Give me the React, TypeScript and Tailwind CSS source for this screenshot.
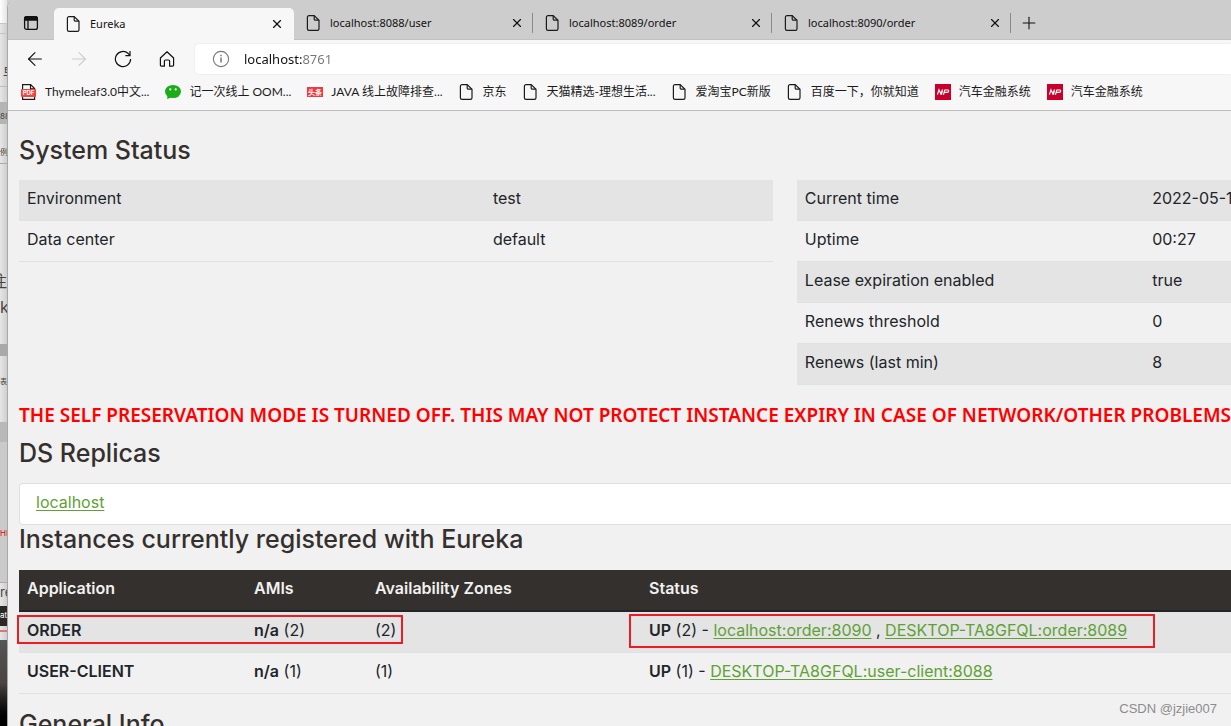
import React from 'react';
import { X, Plus, ArrowLeft, ArrowRight } from 'lucide-react';

const PageIcon = () => (
  <svg width="16" height="18" viewBox="0 0 16 18" fill="none" stroke="#1b1b1b" strokeWidth="1.2" className="shrink-0">
    <path d="M3 1.6h5.2L13 6.2v8.6a1.600 1.600 0 0 1-1.600 1.600H3a1.600 1.600 0 0 1-1.600-1.600V3.200A1.600 1.600 0 0 1 3 1.600z" />
    <path d="M8.2 1.8v3.2a1.2 1.2 0 0 0 1.2 1.2h3.4" />
  </svg>
);

const PdfIcon = () => (
  <svg width="16" height="18" viewBox="0 0 16 18" className="shrink-0">
    <path d="M1.6 1.6h8l4 4v10.8h-12z" fill="#fff" stroke="#1b1b1b" strokeWidth="1.2" />
    <path d="M9.5 1.6v4.2h4" fill="none" stroke="#1b1b1b" strokeWidth="1.2" />
    <rect x="0" y="6" width="15" height="8" rx="1" fill="#fb3f3f" />
    <text x="7.5" y="12.3" textAnchor="middle" fontSize="6" fontWeight="700" fill="#fff" fontFamily="Inter, sans-serif">PDF</text>
  </svg>
);

const ChatIcon = () => (
  <svg width="16" height="16" viewBox="0 0 16 16" className="shrink-0">
    <ellipse cx="8" cy="7.5" rx="8" ry="6.6" fill="#1aad19" />
    <path d="M2.6 11l-.4 4.2L6.4 13z" fill="#1aad19" />
    <circle cx="5.3" cy="5.4" r="1.1" fill="#fff" />
    <circle cx="10.7" cy="5.4" r="1.1" fill="#fff" />
  </svg>
);

const NewsIcon = () => (
  <svg width="16" height="16" viewBox="0 0 16 16" className="shrink-0">
    <rect width="16" height="16" rx="1" fill="#fff" />
    <rect y="3" width="16" height="10" fill="#f8353b" />
    <text x="8" y="10.6" textAnchor="middle" fontSize="7" fontWeight="700" fill="#fff" fontFamily="Noto Sans CJK SC, sans-serif">头条</text>
  </svg>
);

const MpIcon = () => (
  <svg width="16" height="16" viewBox="0 0 16 16" className="shrink-0">
    <rect width="16" height="16" fill="#c8002b" />
    <path d="M2.4 10.6L4 5.8l1.8 4L7.6 5.6 6.4 10.6M8.4 10.8l1.4-4.8h3.2c1 0 .9 2.4-.6 2.4H9.4" fill="none" stroke="#fff" strokeWidth="1.2" />
  </svg>
);

const tabs = [
  { title: 'Eureka', active: true, divider: false },
  { title: 'localhost:8088/user', active: false, divider: true },
  { title: 'localhost:8089/order', active: false, divider: true },
  { title: 'localhost:8090/order', active: false, divider: true },
];

const bookmarks = [
  { label: 'Thymeleaf3.0中文...', Icon: PdfIcon },
  { label: '记一次线上 OOM...', Icon: ChatIcon },
  { label: 'JAVA 线上故障排查...', Icon: NewsIcon },
  { label: '京东', Icon: PageIcon },
  { label: '天猫精选-理想生活...', Icon: PageIcon },
  { label: '爱淘宝PC新版', Icon: PageIcon },
  { label: '百度一下，你就知道', Icon: PageIcon },
  { label: '汽车金融系统', Icon: MpIcon },
  { label: '汽车金融系统', Icon: MpIcon },
];

const environment = [
  ['Environment', 'test'],
  ['Data center', 'default'],
];

const runtime = [
  ['Current time', '2022-05-1'],
  ['Uptime', '00:27'],
  ['Lease expiration enabled', 'true'],
  ['Renews threshold', '0'],
  ['Renews (last min)', '8'],
];

const instances = [
  { app: 'ORDER', count: 2, links: ['localhost:order:8090', 'DESKTOP-TA8GFQL:order:8089'] },
  { app: 'USER-CLIENT', count: 1, links: ['DESKTOP-TA8GFQL:user-client:8088'] },
];

// Strip of the window that lies behind the browser
const WindowBehind = () => (
  <div className="w-[7px] shrink-0 flex flex-col overflow-hidden bg-linear-to-r from-[#e6e6e6] to-[#cfcfcf] font-['Inter','Noto_Sans_CJK_SC',sans-serif] text-[#444]">
    <div className="h-6 bg-linear-to-r from-white to-[#e4e4e4] border-b border-[#c4c4c4]" />
    <div className="h-[10px] border-b border-[#c4c4c4]" />
    <div className="h-[53px] pt-[28px] pl-[3px] text-[13px] leading-[20px] border-b border-[#bbb]">早</div>
    <div className="h-[15px]" />
    <div className="h-[22px] pt-[8px] bg-[#b4b4b4] text-[8px] leading-[12px]">88</div>
    <div className="h-[40px] pt-[22px] text-[8px] leading-[12px] border-b border-[#aaa]">例</div>
    <div className="h-[180px] pt-[104px] text-[16px] leading-[26px]">
      <div className="flex justify-end">注</div>
      <div>k</div>
    </div>
    <div className="h-[12px] bg-[#a9a9a9]" />
    <div className="h-[66px] pt-[20px] text-[7px] leading-[12px]">表</div>
    <div className="h-[20px] bg-[#b9b9b9]" />
    <div className="h-[140px] pt-[84px] bg-[#cacaca] text-[8px] leading-[14px] text-red-600">HI</div>
    <div className="h-[24px] text-[13px] leading-[18px] border-t border-[#aaa]">re</div>
    <div className="h-[20px] bg-[#2c2826] text-[8px] leading-[18px] text-white">at</div>
    <div className="h-[14px] pt-[4px]">
      <div className="h-[2px] bg-[#d77]" />
    </div>
    <div className="flex-1 bg-linear-to-b from-[#555] via-[#4a4442] to-black" />
  </div>
);

const TabStrip = () => (
  <div className="h-10 flex items-end bg-[#cdcdcd] border-b border-[#c2c2c2]">
    <button aria-label="Tab actions" className="w-[46px] h-8 flex items-center justify-center">
      <svg width="16" height="16" viewBox="0 0 16 16" fill="none" stroke="#111" strokeWidth="1.3">
        <rect x="1.6" y="1.6" width="12.8" height="12.8" rx="2" />
        <path d="M1.6 3.4a1.8 1.8 0 0 1 1.8-1.8h9.2a1.8 1.8 0 0 1 1.8 1.8V5H1.6z" fill="#111" />
        <path d="M5 5v9" />
      </svg>
    </button>
    {tabs.map(tab => (
      <div
        key={tab.title}
        className={`w-60 h-8 shrink-0 flex items-center pl-3 ${tab.active ? 'bg-[#f7f7f7] rounded-t-[5px] -mb-px' : '-mr-px'}`}
      >
        <PageIcon />
        <span className="flex-1 pl-2 pt-px text-[11px] text-[#111]">{tab.title}</span>
        <button aria-label={`Close ${tab.title}`} className="w-[14px]">
          <X size={14} strokeWidth={2} color="#111" />
        </button>
        <span className={`w-px h-5 ml-2 mr-px ${tab.divider ? 'bg-[#8a8a8a]' : ''}`} />
      </div>
    ))}
    <button aria-label="New tab" className="h-8 w-9 flex items-center justify-center">
      <Plus size={20} strokeWidth={1.3} color="#111" />
    </button>
  </div>
);

const AddressBar = () => (
  <div className="h-[38px] flex items-center pl-[5px]">
    <button aria-label="Back" className="w-11 flex justify-center"><ArrowLeft size={22} strokeWidth={1.2} color="#111" /></button>
    <button aria-label="Forward" className="w-11 flex justify-center"><ArrowRight size={22} strokeWidth={1.2} color="#ccc" /></button>
    <button aria-label="Refresh" className="w-11 flex justify-center">
      <svg width="18" height="18" viewBox="0 0 18 18" fill="none" stroke="#111" strokeWidth="1.2">
        <path d="M16.6 9A7.6 7.6 0 1 1 14.2 3.5L16 5.4" />
        <path d="M16 1v4.6h-4.6" />
      </svg>
    </button>
    <button aria-label="Home" className="w-11 flex justify-center">
      <svg width="18" height="18" viewBox="0 0 18 18" fill="none" stroke="#111" strokeWidth="1.2" strokeLinejoin="round">
        <path d="M2.4 8L9 1.8 15.6 8v7.2a1 1 0 0 1-1 1h-3V11a1 1 0 0 0-1-1H7.4a1 1 0 0 0-1 1v5.2h-3a1 1 0 0 1-1-1z" />
      </svg>
    </button>
    <div className="flex-1 h-[30px] ml-[6px] pl-[17px] flex items-center gap-[14px] bg-white rounded-l-[4px] shadow-[0_0_2px_#ddd]">
      <svg width="18" height="18" viewBox="0 0 18 18" fill="none" stroke="#777" strokeWidth="1.1" className="shrink-0">
        <circle cx="9" cy="9" r="7.6" />
        <path d="M9 7.6v5" strokeWidth="1.5" />
        <path d="M9 4.8v1.5" strokeWidth="1.5" />
      </svg>
      <input
        aria-label="Address"
        defaultValue="localhost:8761"
        className="flex-1 min-w-0 pt-px outline-none text-[13px] text-transparent bg-clip-text bg-[linear-gradient(to_right,#111_58px,#767676_58px)]"
      />
    </div>
  </div>
);

const Bookmarks = () => (
  <div className="h-8 pb-1 flex items-center gap-4 pl-[13px] whitespace-nowrap">
    {bookmarks.map(({ label, Icon }, i) => (
      <a key={i} href="#" className="flex items-center gap-2 font-['Lato','Noto_Sans_CJK_SC',sans-serif] text-[12px] leading-4 text-[#1b1b1b]">
        <Icon />
        {label}
      </a>
    ))}
  </div>
);

const Heading = ({ children }: { children: React.ReactNode }) => (
  <h1 className="text-[25px] leading-[29px] font-medium text-[#34302d]">{children}</h1>
);

const InfoTable = ({ rows, labelWidth }: { rows: string[][]; labelWidth: string }) => (
  <table className="w-full table-fixed">
    <tbody>
      {rows.map(([label, value]) => (
        <tr key={label} className="border-b border-[#dee2e6] odd:bg-[#e4e4e4]">
          <td className={`${labelWidth} px-2 pt-[6px] pb-[10px]`}>{label}</td>
          <td className="px-2 pt-[6px] pb-[10px] whitespace-nowrap">{value}</td>
        </tr>
      ))}
    </tbody>
  </table>
);

const cell = 'px-2 pt-[6px] pb-[10px]';
const link = 'text-[#5fa134] underline underline-offset-2';

export default function App() {
  return (
    <div className="h-screen flex overflow-hidden bg-[#cfcfcf] font-['Noto_Sans','Noto_Sans_CJK_SC',sans-serif]">
      <WindowBehind />
      <div className="relative flex-1 min-w-0 flex flex-col border-l border-[#a8a8a8] rounded-tl-lg overflow-hidden bg-[#f7f7f7]">
        <TabStrip />
        <AddressBar />
        <Bookmarks />
        <main className="flex-1 min-h-0 overflow-hidden border-t border-[#bdbdbd] bg-[#f1f1f1] pl-[11px] pt-[25px] font-['Inter',sans-serif] text-[16px] leading-6 text-[#212529]">
          <Heading>System Status</Heading>
          <div className="flex items-start gap-6 mt-[15px]">
            <div className="w-[62.2%] shrink-0">
              <InfoTable rows={environment} labelWidth="w-[61.8%]" />
            </div>
            <div className="flex-1 min-w-0">
              <InfoTable rows={runtime} labelWidth="w-[80%]" />
            </div>
          </div>
          <h4 className="mt-4 mb-[10px] font-['Noto_Sans',sans-serif] text-[19px] leading-7 font-semibold text-[#ff0000] whitespace-nowrap">
            THE SELF PRESERVATION MODE IS TURNED OFF. THIS MAY NOT PROTECT INSTANCE EXPIRY IN CASE OF NETWORK/OTHER PROBLEMS
          </h4>
          <Heading>DS Replicas</Heading>
          <ul className="mt-[15px]">
            <li className="h-[42px] px-4 py-[6px] bg-white border border-r-0 border-[#dfdfdf] rounded-l-[4px]">
              <a href="#" className={link}>localhost</a>
            </li>
          </ul>
          <Heading>Instances currently registered with Eureka</Heading>
          <div className="relative mt-4 mb-4">
            <table className="w-full table-fixed">
              <thead>
                <tr className="bg-[#34302d] border-b-2 border-[#212529] text-left text-[#f1f1f1]">
                  <th className={`${cell} w-[227px] font-semibold`}>Application</th>
                  <th className={`${cell} w-[121px] font-semibold`}>AMIs</th>
                  <th className={`${cell} w-[274px] font-semibold`}>Availability Zones</th>
                  <th className={`${cell} font-semibold`}>Status</th>
                </tr>
              </thead>
              <tbody>
                {instances.map(item => (
                  <tr key={item.app} className="border-b border-[#dee2e6] odd:bg-[#e4e4e4]">
                    <td className={`${cell} font-semibold`}>{item.app}</td>
                    <td className={cell}><b className="font-semibold">n/a</b> ({item.count})</td>
                    <td className={cell}>({item.count})</td>
                    <td className={`${cell} whitespace-nowrap`}>
                      <b className="font-semibold">UP</b> ({item.count}) -{' '}
                      {item.links.map((name, i) => (
                        <React.Fragment key={name}>
                          {i > 0 && ' , '}
                          <a href="#" className={link}>{name}</a>
                        </React.Fragment>
                      ))}
                    </td>
                  </tr>
                ))}
              </tbody>
            </table>
            {/* red marker frames */}
            <div className="absolute -left-[2px] top-[45px] w-[386px] h-[29px] border-2 border-[#ed1c24] pointer-events-none" />
            <div className="absolute left-[610px] top-[44px] w-[526px] h-[34px] border-2 border-[#ed1c24] pointer-events-none" />
          </div>
          <Heading>General Info</Heading>
        </main>
        <span className="absolute right-[14px] bottom-[9px] font-['Liberation_Sans',sans-serif] text-[13px] leading-4 text-[#8c8c8c]">CSDN @jzjie007</span>
      </div>
    </div>
  );
}
